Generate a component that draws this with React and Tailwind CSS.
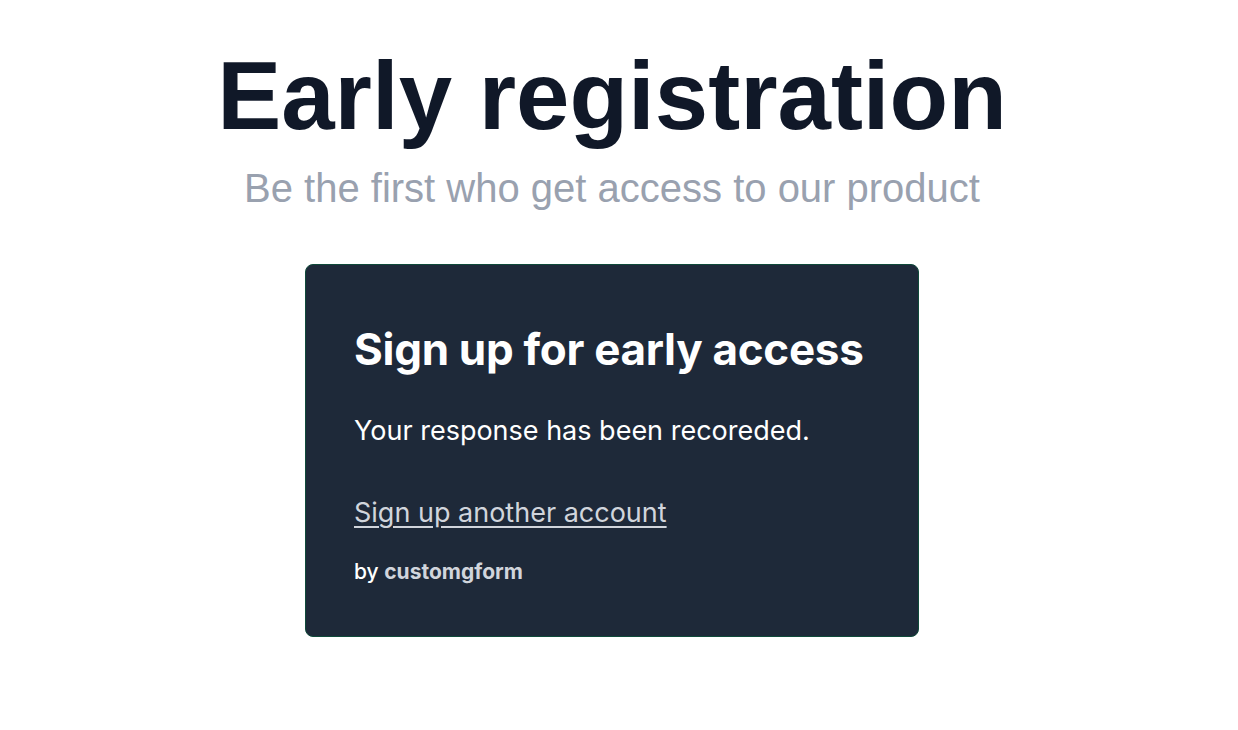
export default function App() {
  return (
    <div className="min-h-screen bg-white pr-[14px]">
      <div className="flex flex-col items-center pt-12">
        <h1 className="text-8xl leading-none font-bold text-gray-900 font-['Liberation_Sans',Arial,sans-serif]">
          Early registration
        </h1>
        <p className="mt-6 text-[40px] leading-none text-gray-400 font-['Liberation_Sans',Arial,sans-serif]">
          Be the first who get access to our product
        </p>

        <div className="mt-14 w-[614px] rounded-lg border border-[#0f4a3a] bg-gray-800 px-12 pt-12 pb-[50px] font-['Inter',sans-serif]">
          <h2 className="whitespace-nowrap text-[44px] leading-[72px] font-bold tracking-[-0.3px] text-white">
            Sign up for early access
          </h2>
          <p className="mt-7 text-[27px] leading-9 text-white">Your response has been recoreded.</p>
          <a href="#" className="mt-[46px] block text-[27px] leading-9 text-gray-300 underline underline-offset-4">
            Sign up another account
          </a>
          <div className="mt-[27px] text-[21px] leading-7 font-medium text-white">
            by <span className="font-bold text-gray-300">customgform</span>
          </div>
        </div>
      </div>
    </div>
  );
}
